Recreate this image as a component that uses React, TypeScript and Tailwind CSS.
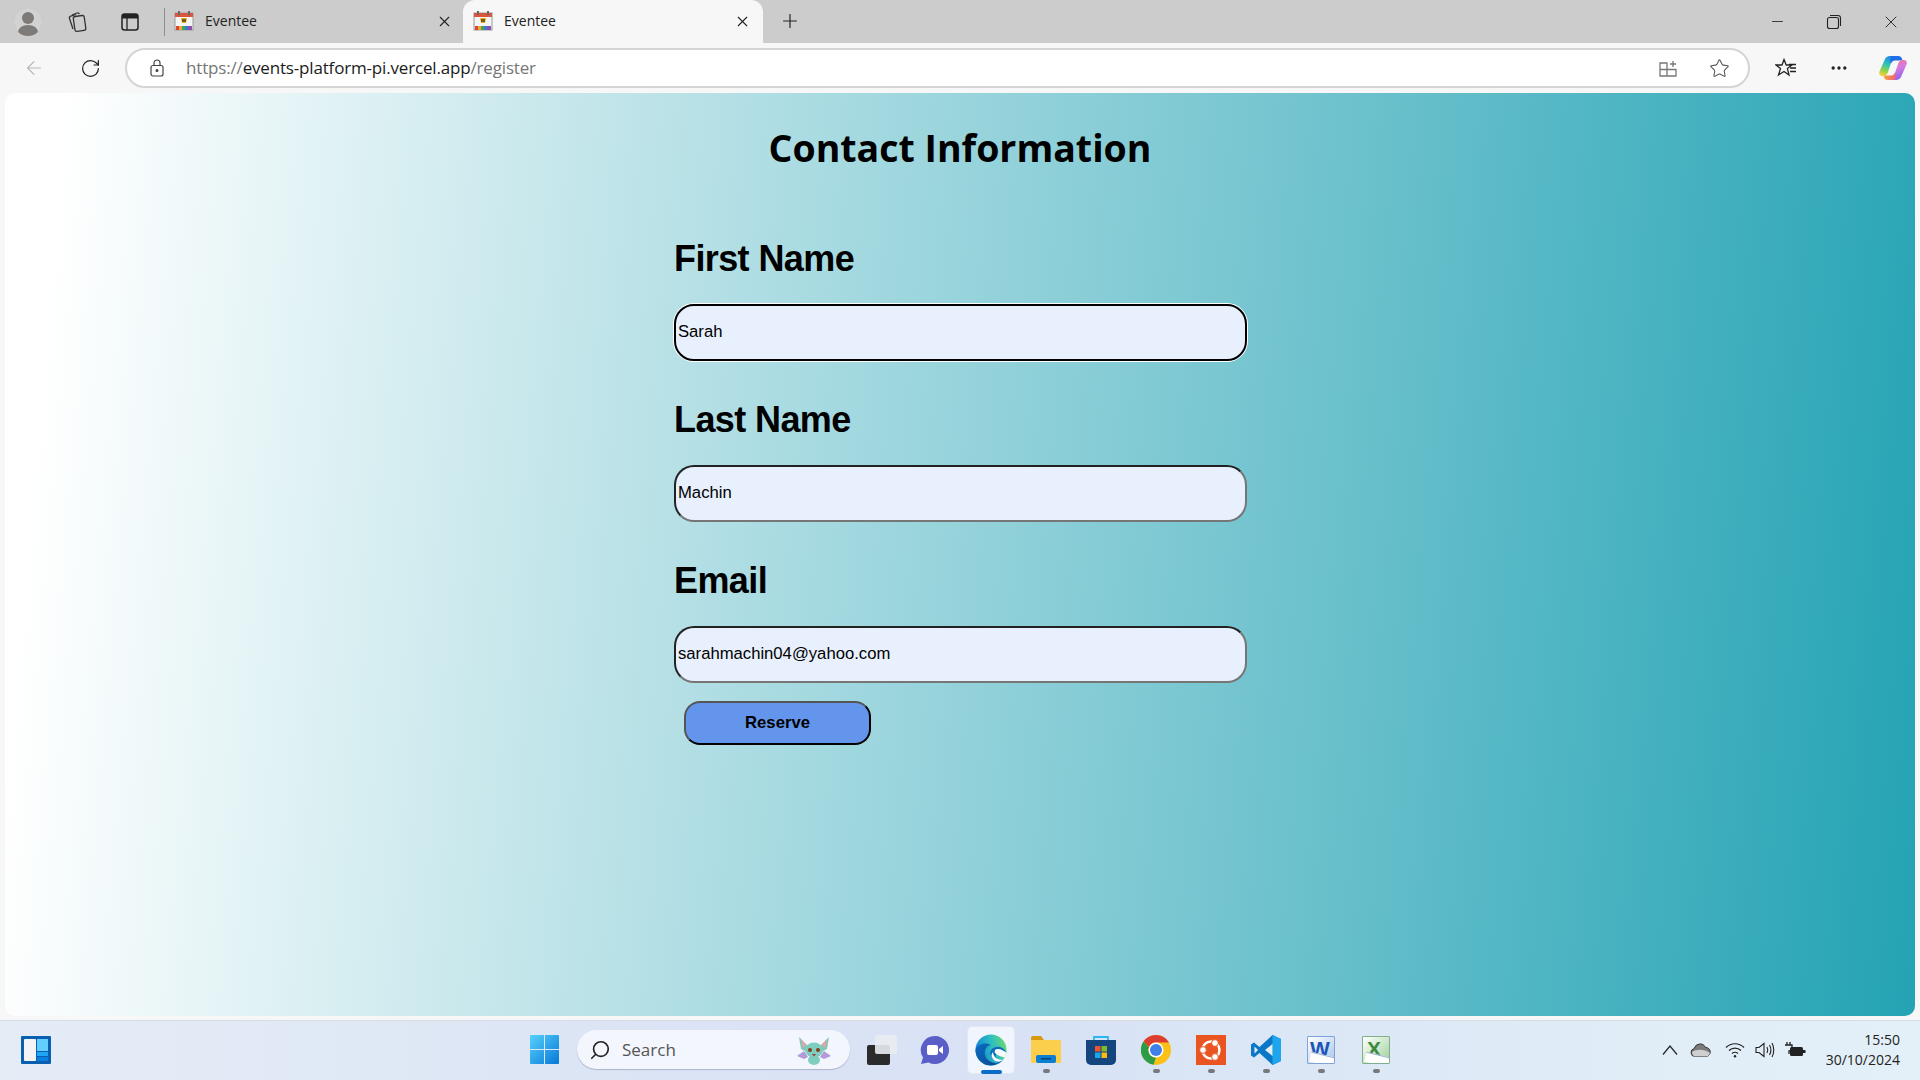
import { ArrowLeft, Minus, MoreHorizontal, Plus, RotateCw, Search, Star, X } from 'lucide-react';

const UI_FONT = "font-['Open_Sans','Noto_Sans',sans-serif]";

function Favicon() {
  return (
    <svg width="20" height="20" viewBox="0 0 20 20" className="shrink-0">
      <rect x="1" y="2" width="18" height="17" fill="#f5f5f5" stroke="#9a9a9a" />
      <rect x="1" y="2" width="18" height="4" fill="#d9573f" />
      <rect x="4" y="0" width="2" height="4" fill="#666" />
      <rect x="14" y="0" width="2" height="4" fill="#666" />
      <path d="M7 7h6l-1 5H8z" fill="#eeb021" />
      <rect x="8" y="8" width="4" height="3" fill="#7a5a12" />
      <rect x="2" y="15" width="3" height="4" fill="#d8443c" />
      <rect x="5" y="15" width="3" height="4" fill="#f0a92d" />
      <rect x="8" y="15" width="3" height="4" fill="#43a55a" />
      <rect x="11" y="15" width="3" height="4" fill="#3a7bd0" />
      <rect x="14" y="15" width="4" height="4" fill="#8a4fb0" />
    </svg>
  );
}

function Tab({ active }: { active?: boolean }) {
  return (
    <div
      className={
        active
          ? 'flex items-center w-[300px] h-[43px] pl-[10px] pr-[12px] pb-[1px] bg-[#f7f7f7] rounded-t-[12px]'
          : 'flex items-center w-[298px] h-[43px] pl-[9px] pr-[10px] pb-[1px]'
      }
    >
      <Favicon />
      <span className="ml-[11px] text-[14px] leading-[18px] text-[#222] flex-1">Eventee</span>
      <X size={17} strokeWidth={1.5} color="#222" />
    </div>
  );
}

function TabStrip() {
  return (
    <div className="flex items-center h-[43px] bg-[#cccccc] shrink-0">
      <div className="ml-[14px] w-[28px] h-[28px] rounded-full bg-[#b5b5b5] overflow-hidden shrink-0">
        <svg width="28" height="28" viewBox="0 0 28 28">
          <rect width="28" height="28" fill="#d2d2d2" />
          <circle cx="14" cy="10" r="6" fill="#7d7a77" />
          <ellipse cx="14" cy="24" rx="10" ry="7" fill="#7d7a77" />
        </svg>
      </div>
      <svg width="22" height="22" viewBox="0 0 22 22" fill="none" stroke="#333" strokeWidth="1.3" className="ml-[24px] shrink-0">
        <rect x="8" y="5" width="11" height="15" rx="2" transform="rotate(-8 13 12)" />
        <path d="M7 18 3.5 7.5c-.3-1 .2-2 1.2-2.3L10 3.5" />
        <path d="M6 4 11 2c1-.3 2 0 2.300 1" />
      </svg>
      <svg width="20" height="20" viewBox="0 0 20 20" fill="none" className="ml-[32px] shrink-0">
        <rect x="2" y="2" width="16" height="16" rx="2.500" stroke="#222" strokeWidth="1.500" />
        <path d="M2 6.500V4.500A2.500 2.500 0 0 1 4.500 2h11A2.500 2.500 0 0 1 18 4.500v2z" fill="#222" />
        <path d="M7 6v12" stroke="#222" strokeWidth="1.300" />
      </svg>
      <div className="ml-[24px] w-px h-[28px] bg-[#8f8f8f] shrink-0" />
      <Tab />
      <Tab active />
      <Plus size={22} strokeWidth={1.3} color="#222" className="ml-[16px] mb-[2px] shrink-0" />
      <div className="flex-1" />
      <Minus size={17} strokeWidth={1.2} color="#222" className="shrink-0" />
      <svg width="16" height="16" viewBox="0 0 16 16" fill="none" stroke="#222" strokeWidth="1.100" className="ml-[40px] shrink-0">
        <rect x="1.500" y="3.500" width="11" height="11" rx="2" />
        <path d="M4 1.500h8a2.500 2.500 0 0 1 2.500 2.500v8" />
      </svg>
      <X size={20} strokeWidth={1.1} color="#222" className="ml-[39px] mr-[19px] shrink-0" />
    </div>
  );
}

function CopilotIcon() {
  return (
    <svg width="28" height="26" viewBox="0 0 28 26" className="shrink-0">
      <defs>
        <linearGradient id="cpA" x1="0.6" y1="0" x2="0.3" y2="1">
          <stop offset="0" stopColor="#1f7fee" />
          <stop offset="0.45" stopColor="#2fc6b4" />
          <stop offset="0.75" stopColor="#8fd04a" />
          <stop offset="1" stopColor="#f4d03a" />
        </linearGradient>
        <linearGradient id="cpB" x1="0.3" y1="0" x2="0.6" y2="1">
          <stop offset="0" stopColor="#f2708e" />
          <stop offset="0.4" stopColor="#d87be0" />
          <stop offset="1" stopColor="#8a62ea" />
        </linearGradient>
        <linearGradient id="cpC" x1="0" y1="0" x2="1" y2="0">
          <stop offset="0" stopColor="#f4a43a" />
          <stop offset="1" stopColor="#f0607a" />
        </linearGradient>
      </defs>
      <path d="M11 1h8c-3 0-5 1-6 4L9 17c-1 3-3 4-5 4H3c-2 0-3.500-2-2.500-4.500L6 4c1-2 3-3 5-3z" fill="url(#cpA)" />
      <path d="M12 1h7c3 0 4 2 4.500 4.500H16c-2 0-3 1-4 3l-1-3z" fill="#1f6fe8" />
      <path d="M17 25H9c3 0 5-1 6-4l4-12c1-3 3-4 5-4h1c2 0 3.500 2 2.500 4.500L22 22c-1 2-3 3-5 3z" fill="url(#cpB)" />
      <path d="M16 25H9c-3 0-4-2-4.500-4.500H12c2 0 3-1 4-3l1 3z" fill="url(#cpC)" />
    </svg>
  );
}

function Toolbar() {
  return (
    <div className="flex items-center h-[50px] bg-[#f7f7f7] shrink-0">
      <ArrowLeft size={22} strokeWidth={1.2} color="#b5b5b5" className="ml-[23px] shrink-0" />
      <RotateCw size={21} strokeWidth={1.4} color="#222" className="ml-[35px] shrink-0" />
      <div className="ml-[24px] flex items-center w-[1625px] h-[40px] bg-white border-2 border-[#d4d4d4] rounded-full shrink-0">
        <svg width="14" height="18" viewBox="0 0 14 18" fill="none" stroke="#444" strokeWidth="1.200" className="ml-[23px] shrink-0">
          <rect x="1" y="6.500" width="12" height="10.500" rx="2" />
          <path d="M4 6.500V4a3 3 0 0 1 6 0v2.500" />
          <circle cx="7" cy="11.500" r="0.900" fill="#444" />
        </svg>
        <div className={`ml-[22px] text-[17px] tracking-[-0.17px] flex-1 ${UI_FONT}`}>
          <span className="text-[#767676]">https://</span>
          <span className="text-[#1b1b1b]">events-platform-pi.vercel.app</span>
          <span className="text-[#767676]">/register</span>
        </div>
        <svg width="19" height="19" viewBox="0 0 19 19" fill="none" stroke="#777" strokeWidth="1.300" className="shrink-0">
          <path d="M1 4h7v6.500H1zM1 10.500h7V17H1zM8 10.500h9V17H8z" />
          <path d="M11 5h6M14 2v6" />
        </svg>
        <Star size={21} strokeWidth={1.2} color="#555" className="ml-[31px] mr-[18px] shrink-0" />
      </div>
      <svg width="22" height="20" viewBox="0 0 22 20" fill="none" stroke="#222" strokeWidth="1.300" className="ml-[25px] shrink-0">
        <path d="M9 1.500 11.200 7H17l-4.600 3.600L14 17l-5-3.500L3.500 17l2-6.400L1 7h6z" />
        <path d="M14 6.500h7M15 10h6M15 13.500h6" />
      </svg>
      <MoreHorizontal size={20} strokeWidth={2} color="#222" className="ml-[32px] shrink-0" />
      <div className="ml-[30px]">
        <CopilotIcon />
      </div>
    </div>
  );
}

const FIELDS = [
  { label: 'First Name', value: 'Sarah', focused: true },
  { label: 'Last Name', value: 'Machin', focused: false },
  { label: 'Email', value: 'sarahmachin04@yahoo.com', focused: false },
];

function RegisterPage() {
  return (
    <div className="mx-[5px] h-[923px] rounded-[10px] bg-[linear-gradient(95deg,#ffffff_3%,#24a3b4_100%)] font-['Liberation_Sans',Arial,sans-serif] text-black shrink-0">
      <h1 className={`pt-[32px] text-center text-[37.5px] leading-[46px] font-bold ${UI_FONT}`}>Contact Information</h1>
      <div className="w-[574px] mx-auto mt-[67px] pl-px flex flex-col">
        {FIELDS.map((f) => (
          <div key={f.label} className="flex flex-col mb-[38px]">
            <h2 className="text-[36px] leading-[42px] tracking-[-0.6px] font-bold">{f.label}</h2>
            <input
              readOnly
              value={f.value}
              className={
                f.focused
                  ? 'mt-[24px] h-[57px] w-full pl-[2px] pb-[2px] text-[16.67px] text-black bg-[#e8f0fe] border-2 border-black rounded-[20px] outline-none shadow-[0_0_0_1px_#ffffff]'
                  : 'mt-[24px] h-[57px] w-full pl-[2px] pb-[2px] text-[16.67px] text-black bg-[#e8f0fe] border-2 border-t-[#222222] border-l-[#222222] border-b-[#767676] border-r-[#767676] rounded-[20px] outline-none'
              }
            />
          </div>
        ))}
        <button className="-mt-[20px] ml-[10px] w-[187px] h-[44px] pb-[2px] text-[16.67px] font-bold text-black bg-[#6495ed] border-2 border-t-[#555555] border-l-[#555555] border-b-black border-r-black rounded-[16px]">
          Reserve
        </button>
      </div>
    </div>
  );
}

function WidgetsIcon() {
  return (
    <svg width="30" height="28" viewBox="0 0 30 28" className="shrink-0">
      <rect width="30" height="28" rx="1" fill="#0a5fb0" />
      <rect x="3" y="3" width="12" height="22" rx="1" fill="#f4f4f4" />
      <rect x="16" y="3" width="11" height="12" fill="#63cdfd" />
      <rect x="16" y="16" width="11" height="4" fill="#1ea5f5" />
      <rect x="16" y="21" width="11" height="4" fill="#0b7fde" />
    </svg>
  );
}

function StartIcon() {
  return (
    <svg width="29" height="29" viewBox="0 0 29 29" className="shrink-0">
      <defs>
        <linearGradient id="winA" x1="0" y1="0" x2="1" y2="1">
          <stop offset="0" stopColor="#55d2fb" />
          <stop offset="1" stopColor="#0878d8" />
        </linearGradient>
      </defs>
      <path d="M0 1a1 1 0 0 1 1-1h13v14H0zM15 0h13a1 1 0 0 1 1 1v13H15zM0 15h14v14H1a1 1 0 0 1-1-1zM15 15h14v13a1 1 0 0 1-1 1H15z" fill="url(#winA)" />
    </svg>
  );
}

function BatMascot() {
  return (
    <svg width="36" height="30" viewBox="0 0 36 30" className="shrink-0">
      <path d="M8 16 1 21l7 3 4-2zM28 16l7 5-7 3-4-2z" fill="#b39ad8" />
      <path d="M11 10 3 2l2 12 6 3zM25 10l8-8-2 12-6 3z" fill="#7fc6b6" />
      <path d="M10 10 5 4l2 9zM26 10l5-6-2 9z" fill="#ef9fa6" />
      <ellipse cx="18" cy="15" rx="9" ry="7.500" fill="#7ecdbf" />
      <ellipse cx="18" cy="25" rx="6" ry="5" fill="#7ecdbf" />
      <circle cx="14" cy="15" r="2" fill="#8a3d1e" />
      <circle cx="22" cy="15" r="2" fill="#8a3d1e" />
      <path d="M16 19h4l-2 2.500z" fill="#a33" />
    </svg>
  );
}

function MeetIcon() {
  return (
    <svg width="30" height="30" viewBox="0 0 30 30" className="shrink-0">
      <path d="M15 1a14 14 0 1 1-6.500 26.400L1 29l2-6.500A14 14 0 0 1 15 1z" fill="#5a5fc8" />
      <rect x="7" y="10" width="11" height="10" rx="2" fill="#fff" />
      <path d="m19 14 4-3v8l-4-3z" fill="#fff" />
    </svg>
  );
}

function EdgeIcon() {
  return (
    <svg width="32" height="32" viewBox="0 0 32 32" className="shrink-0">
      <defs>
        <linearGradient id="edgeA" x1="0" y1="0.5" x2="1" y2="0.2">
          <stop offset="0" stopColor="#0f7fd8" />
          <stop offset="0.55" stopColor="#2dbfc0" />
          <stop offset="1" stopColor="#72dc68" />
        </linearGradient>
        <linearGradient id="edgeB" x1="0" y1="0" x2="1" y2="1">
          <stop offset="0" stopColor="#0c6cc4" />
          <stop offset="1" stopColor="#0a4a90" />
        </linearGradient>
        <clipPath id="edgeClip">
          <circle cx="16" cy="16" r="15.500" />
        </clipPath>
      </defs>
      <g clipPath="url(#edgeClip)">
        <rect width="32" height="32" fill="url(#edgeA)" />
        <path d="M0 16c3-7 11-8 16-5-5 1-7 5-6 10s7 9 15 8l-8 3C6 32 0 26 0 16z" fill="url(#edgeB)" />
        <path d="M32 20c-2-6-7-8-11-7-5 1-7 5-5 9s6 8 12 8l4-4c-4 1-10 0-11-3-1-2 1-4 3-4 3 0 6 1 8 1z" fill="#0f6cbd" />
        <path d="M32 24c-5-1-9-2-12-5-1-2 0-4 3-4s6 2 9 4z" fill="#f4fafd" />
        <path d="M18 18c0 5 5 8 10 8-4 3-8 2-10-1-2-2-2-5 0-7z" fill="#f4fafd" />
      </g>
    </svg>
  );
}

function ExplorerIcon() {
  return (
    <svg width="30" height="27" viewBox="0 0 30 27" className="shrink-0">
      <path d="M0 2a2 2 0 0 1 2-2h8l3 4H0z" fill="#d69a0e" />
      <rect y="4" width="30" height="23" rx="1" fill="#fbcf4b" />
      <rect x="5" y="19" width="20" height="8" rx="2" fill="#0a7fd1" />
      <rect x="10" y="22" width="10" height="1.500" fill="#073f7a" />
    </svg>
  );
}

function StoreIcon() {
  return (
    <svg width="30" height="30" viewBox="0 0 30 30" fill="none" className="shrink-0">
      <path d="M8 6V2h14v4" stroke="#2bb8f0" strokeWidth="1.800" />
      <path d="M0 5h30v20a5 5 0 0 1-5 5H5a5 5 0 0 1-5-5z" fill="#14457f" />
      <rect x="9" y="11" width="5.500" height="5.500" fill="#f0532e" />
      <rect x="15.500" y="11" width="5.500" height="5.500" fill="#7fba2a" />
      <rect x="9" y="17.500" width="5.500" height="5.500" fill="#1ba6ea" />
      <rect x="15.500" y="17.500" width="5.500" height="5.500" fill="#fcb90f" />
    </svg>
  );
}

function ChromeIcon() {
  return (
    <svg width="30" height="30" viewBox="0 0 30 30" className="shrink-0">
      <circle cx="15" cy="15" r="15" fill="#fbc116" />
      <path d="M15 0a15 15 0 0 1 13 7.500H15a7.500 7.500 0 0 0-7 4.500L2.500 6.500A15 15 0 0 1 15 0z" fill="#dd3e33" />
      <path d="M2.500 6.500 8 12a7.500 7.500 0 0 0 7 10.500L12.500 29.800A15 15 0 0 1 2.500 6.500z" fill="#2d9c48" />
      <circle cx="15" cy="15" r="7.500" fill="#fff" />
      <circle cx="15" cy="15" r="6" fill="#3f7fe8" />
    </svg>
  );
}

function UbuntuIcon() {
  return (
    <svg width="30" height="30" viewBox="0 0 30 30" fill="none" className="shrink-0">
      <rect width="30" height="30" fill="#e95420" />
      <circle cx="15" cy="15" r="8.500" stroke="#fff" strokeWidth="2.500" />
      <circle cx="7" cy="15" r="3.400" fill="#fff" stroke="#e95420" />
      <circle cx="19" cy="8" r="3.400" fill="#fff" stroke="#e95420" />
      <circle cx="19" cy="22" r="3.400" fill="#fff" stroke="#e95420" />
    </svg>
  );
}

function VscodeIcon() {
  return (
    <svg width="30" height="30" viewBox="0 0 30 30" className="shrink-0">
      <path d="M21.500 0 30 4v22l-8.500 4-13-12-5.500 4.500L0 20.500v-11L3 7.500 8.500 12z" fill="#0a78c6" />
      <path d="M21.500 0 30 4v22l-8.500 4z" fill="#1fa5ee" />
      <path d="M21.500 9v12l-7.500-6z" fill="#e4edf6" />
      <path d="M3.500 11.500 7 15l-3.500 3.500z" fill="#e4edf6" />
    </svg>
  );
}

function OfficeIcon({ letter, word }: { letter: string; word?: boolean }) {
  return (
    <div
      className={
        word
          ? 'relative w-[28px] h-[28px] shrink-0 border border-[#7fa3d6] rounded-[1px] bg-[linear-gradient(135deg,#ffffff,#a9c6ec)] overflow-hidden'
          : 'relative w-[28px] h-[28px] shrink-0 border border-[#7fb08a] rounded-[1px] bg-[linear-gradient(135deg,#ffffff,#9ed09a)] overflow-hidden'
      }
    >
      <span
        className={
          word
            ? "absolute left-[2px] top-[1px] text-[21px] leading-[22px] font-bold font-['Liberation_Sans',sans-serif] text-[#1d55b8]"
            : "absolute left-[4px] top-[1px] text-[21px] leading-[22px] font-bold font-['Liberation_Sans',sans-serif] text-[#3b8a3f]"
        }
      >
        {letter}
      </span>
      <div className="absolute left-[2px] right-[-4px] bottom-[-2px] h-[10px] bg-white rotate-[14deg] border-t border-[#9ab2d0]" />
    </div>
  );
}

function Tray() {
  return (
    <div className="flex items-center ml-auto mr-[20px] text-[#222]">
      <svg width="18" height="12" viewBox="0 0 18 12" fill="none" stroke="#222" strokeWidth="1.200" className="shrink-0">
        <path d="M2 10.500 9 2l7 8.500" />
      </svg>
      <svg width="21" height="14" viewBox="0 0 21 14" className="ml-[11px] shrink-0">
        <path d="M5 13.500a4 4 0 0 1-.8-7.900A6 6 0 0 1 15.500 4.500 4.500 4.500 0 0 1 16 13.500z" fill="#7a7a7a" stroke="#333" />
        <path d="M2 9c5-3 12-3 18 1-.5 2-2 3.500-4 3.500H5C3.500 13.500 2 11 2 9z" fill="#cfcfcf" />
      </svg>
      <svg width="20" height="16" viewBox="0 0 20 16" fill="none" stroke="#222" strokeWidth="1.200" className="ml-[14px] shrink-0">
        <path d="M1 5.500c5-5 13-5 18 0M4 8.500c3.500-3.300 8.500-3.300 12 0M7 11.500c1.800-1.500 4.200-1.500 6 0" />
        <circle cx="10" cy="14.300" r="1.200" fill="#222" stroke="none" />
      </svg>
      <svg width="20" height="18" viewBox="0 0 20 18" fill="none" stroke="#222" strokeWidth="1.100" className="ml-[10px] shrink-0">
        <path d="M1 6.500h3L9 2.500v13l-5-4H1z" />
        <path d="M12 6c1 2 1 4 0 6M14.500 4c1.700 3 1.700 7 0 10M17 2c2.300 4 2.300 10 0 14" />
      </svg>
      <svg width="21" height="16" viewBox="0 0 21 16" className="ml-[10px] shrink-0">
        <path d="M2 0v3M5 0v3M0 3h7v3a3 3 0 0 1-3 3v3" fill="none" stroke="#222" strokeWidth="1.300" />
        <rect x="5" y="5" width="13" height="9" rx="1.500" fill="#222" />
        <rect x="18" y="8" width="2.500" height="3" fill="#222" />
      </svg>
      <div className={`ml-[20px] flex flex-col items-end text-[14px] leading-[20px] ${UI_FONT}`}>
        <span>15:50</span>
        <span>30/10/2024</span>
      </div>
    </div>
  );
}

function RunningDot({ children }: { children: React.ReactNode }) {
  return (
    <div className="relative flex items-center justify-center w-[30px] h-[30px] shrink-0">
      {children}
      <div className="absolute -bottom-[8px] w-[7px] h-[4px] rounded-full bg-[#77797d]" />
    </div>
  );
}

function Taskbar() {
  return (
    <div className="flex items-center h-[60px] pb-[2px] bg-[linear-gradient(90deg,#e4edf6_0%,#dbe4f4_35%,#d8e2f5_55%,#e0edf7_85%,#e4f0f8_100%)] border-t border-[#d7dbe4] shrink-0">
      <div className="ml-[21px]">
        <WidgetsIcon />
      </div>
      <div className="ml-[479px]">
        <StartIcon />
      </div>
      <div className="ml-[18px] flex items-center w-[273px] h-[39px] bg-[#f3f6fd] rounded-full shadow-[0_1px_1px_#aab4cc] shrink-0">
        <Search size={22} strokeWidth={1.800} color="#222" className="ml-[12px] -scale-x-100" />
        <span className={`ml-[11px] text-[17px] text-[#555] flex-1 ${UI_FONT}`}>Search</span>
        <div className="mr-[18px]">
          <BatMascot />
        </div>
      </div>
      <div className="relative ml-[17px] w-[30px] h-[30px] shrink-0">
        <div className="absolute left-0 bottom-0 w-[23px] h-[20px] rounded-[2px] bg-[#2b2b2b]" />
        <div className="absolute right-0 top-0 w-[22px] h-[19px] rounded-[2px] bg-[#e9ecf2]/90" />
      </div>
      <div className="ml-[23px]">
        <MeetIcon />
      </div>
      <div className="relative ml-[17px] flex items-center justify-center w-[48px] h-[48px] rounded-[5px] bg-[#f1f5fd] border border-[#e3e8f2] shrink-0">
        <EdgeIcon />
        <div className="absolute bottom-[-1px] w-[21px] h-[4px] rounded-full bg-[#0a6cc9]" />
      </div>
      <div className="ml-[16px]">
        <RunningDot>
          <ExplorerIcon />
        </RunningDot>
      </div>
      <div className="ml-[25px]">
        <StoreIcon />
      </div>
      <div className="ml-[25px]">
        <RunningDot>
          <ChromeIcon />
        </RunningDot>
      </div>
      <div className="ml-[25px]">
        <RunningDot>
          <UbuntuIcon />
        </RunningDot>
      </div>
      <div className="ml-[25px]">
        <RunningDot>
          <VscodeIcon />
        </RunningDot>
      </div>
      <div className="ml-[25px]">
        <RunningDot>
          <OfficeIcon letter="W" word />
        </RunningDot>
      </div>
      <div className="ml-[25px]">
        <RunningDot>
          <OfficeIcon letter="X" />
        </RunningDot>
      </div>
      <Tray />
    </div>
  );
}

export default function App() {
  return (
    <div className={`flex flex-col w-[1920px] h-[1080px] overflow-hidden bg-[#f7f7f7] ${UI_FONT}`}>
      <TabStrip />
      <Toolbar />
      <RegisterPage />
      <div className="flex-1" />
      <Taskbar />
    </div>
  );
}
